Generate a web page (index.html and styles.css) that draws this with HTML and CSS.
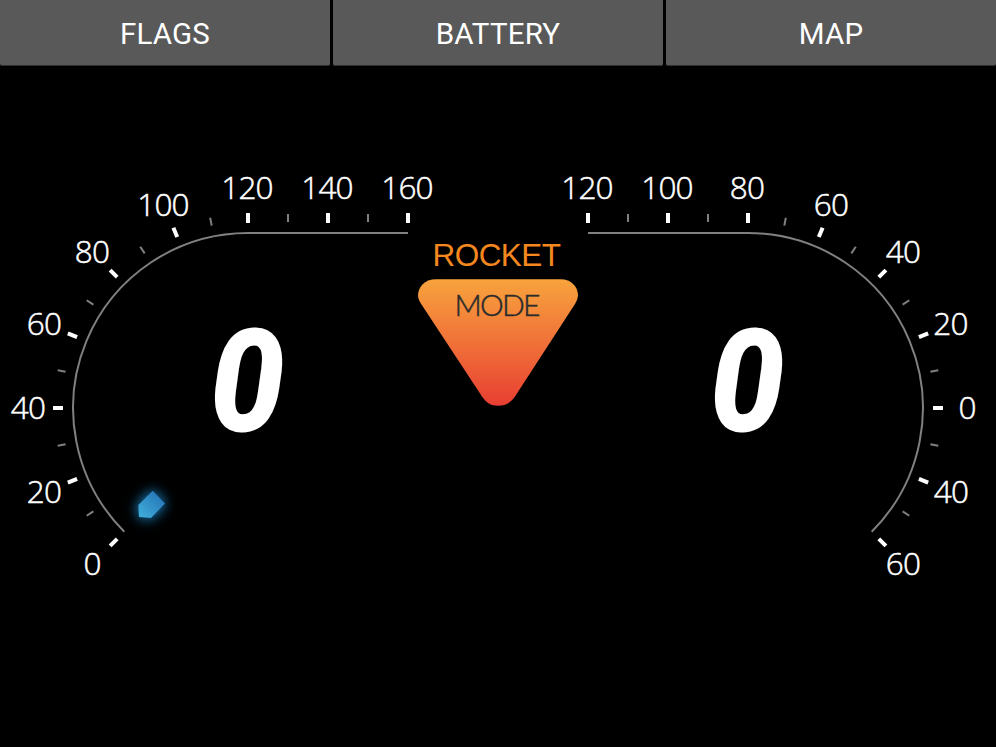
FILE: index.html
```html
<!DOCTYPE html>
<html lang="en">
<head>
<meta charset="utf-8">
<title>Dashboard</title>
<link rel="stylesheet" href="styles.css">
</head>
<body>
<nav class="tabs">
  <button class="tab">FLAGS</button>
  <button class="tab">BATTERY</button>
  <button class="tab">MAP</button>
</nav>
<main class="cluster">
<svg class="gauges" viewBox="0 66 996 681">
  <defs>
    <path id="major" class="major" d="M0-185V-195"/>
    <path id="minor" class="minor" d="M0-186V-194"/>
    <linearGradient id="rocketFill" x1="0" y1="0" x2="0" y2="1">
      <stop offset="0" stop-color="#f8a33d"/>
      <stop offset="1" stop-color="#e83f33"/>
    </linearGradient>
    <linearGradient id="needleFill" x1="1" y1="0" x2="0.1" y2="1">
      <stop offset="0.1" stop-color="#2472b5"/>
      <stop offset="1" stop-color="#40aed9"/>
    </linearGradient>
  </defs>

  <g transform="translate(248 408)">
    <path class="track" d="M160-175H0A175 175 0 0 0-123.7 123.7"/>
    <use href="#major" x="160"/><use href="#minor" x="120"/>
    <use href="#major" x="80"/><use href="#minor" x="40"/>
    <use href="#major"/>
    <use href="#minor" transform="rotate(-11.25)"/>
    <use href="#major" transform="rotate(-22.5)"/>
    <use href="#minor" transform="rotate(-33.75)"/>
    <use href="#major" transform="rotate(-45)"/>
    <use href="#minor" transform="rotate(-56.25)"/>
    <use href="#major" transform="rotate(-67.5)"/>
    <use href="#minor" transform="rotate(-78.75)"/>
    <use href="#major" transform="rotate(-90)"/>
    <use href="#minor" transform="rotate(-101.25)"/>
    <use href="#major" transform="rotate(-112.5)"/>
    <use href="#minor" transform="rotate(-123.75)"/>
    <use href="#major" transform="rotate(-135)"/>
  </g>
  <g class="labels">
    <text x="92" y="575">0</text>
    <text x="44" y="503">20</text>
    <text x="28" y="419">40</text>
    <text x="44" y="335">60</text>
    <text x="92" y="263">80</text>
    <text x="163" y="216">100</text>
    <text x="247" y="199">120</text>
    <text x="327" y="199">140</text>
    <text x="407" y="199">160</text>
  </g>

  <g transform="translate(748 408)">
    <path class="track" d="M-160-175H0A175 175 0 0 1 123.7 123.7"/>
    <use href="#major" x="-160"/><use href="#minor" x="-120"/>
    <use href="#major" x="-80"/><use href="#minor" x="-40"/>
    <use href="#major"/>
    <use href="#minor" transform="rotate(11.25)"/>
    <use href="#major" transform="rotate(22.5)"/>
    <use href="#minor" transform="rotate(33.75)"/>
    <use href="#major" transform="rotate(45)"/>
    <use href="#minor" transform="rotate(56.25)"/>
    <use href="#major" transform="rotate(67.5)"/>
    <use href="#minor" transform="rotate(78.75)"/>
    <use href="#major" transform="rotate(90)"/>
    <use href="#minor" transform="rotate(101.25)"/>
    <use href="#major" transform="rotate(112.5)"/>
    <use href="#minor" transform="rotate(123.75)"/>
    <use href="#major" transform="rotate(135)"/>
  </g>
  <g class="labels">
    <text x="587" y="199">120</text>
    <text x="667" y="199">100</text>
    <text x="747" y="199">80</text>
    <text x="831" y="216">60</text>
    <text x="903" y="263">40</text>
    <text x="950.5" y="335">20</text>
    <text x="967" y="419">0</text>
    <text x="951" y="503">40</text>
    <text x="903" y="575">60</text>
  </g>

  <text class="readout" transform="translate(247 430) scale(.94 1)">0</text>
  <text class="readout" transform="translate(747 430) scale(.94 1)">0</text>

  <path class="needle" d="M152.7 490.7 165 503.4 151 518 139 517 138.3 505Z" fill="url(#needleFill)"/>

  <text class="rocket" x="432.5" y="266" textLength="128.5">ROCKET</text>
  <path d="M436 279.2H560.5C571.5 279.2 578.2 287 578 296Q577.5 300 575 304L515 396.5C510 403.5 505 405.7 498 405.7S487 403.5 482 396.5L421.5 304.5Q418 299 418 295.5C418 287 424.5 279.2 436 279.2Z" fill="url(#rocketFill)"/>
  <text class="mode" x="454.5" y="316.3" textLength="86">MODE</text>
</svg>
</main>
</body>
</html>
```
FILE: styles.css
```css
body {
  margin: 0;
  height: 747px;
  display: flex;
  flex-direction: column;
  overflow: hidden;
  background: #000;
}

.tabs {
  display: grid;
  grid-template-columns: repeat(3, 1fr);
  gap: 3px;
  height: 66px;
}

.tab {
  margin: 0;
  padding: 2px 0 0;
  border: 0;
  border-bottom: 1px solid #303030;
  border-radius: 0 0 2px 2px;
  background: #595959;
  color: #fff;
  font: 400 29.5px Roboto, sans-serif;
  letter-spacing: 0.2px;
}

.cluster {
  flex: 1;
}

.gauges {
  display: block;
  width: 996px;
  height: 681px;
}

.track {
  fill: none;
  stroke: #808080;
  stroke-width: 2;
}

.major {
  stroke: #fff;
  stroke-width: 4;
}

.minor {
  stroke: #808080;
  stroke-width: 2;
}

.labels {
  fill: #fff;
  stroke: #fff;
  stroke-width: 0.5px;
  font: 300 31.5px "Open Sans", "Noto Sans", sans-serif;
  letter-spacing: -0.8px;
  text-anchor: middle;
}

.readout {
  fill: #fff;
  stroke: #fff;
  stroke-width: 3px;
  stroke-linejoin: round;
  font: italic 700 139px Roboto, sans-serif;
  text-anchor: middle;
}

.rocket {
  fill: #f5871f;
  font: 31.5px "Liberation Sans", Arial, sans-serif;
}

.mode {
  fill: #2b2b2b;
  stroke: #2b2b2b;
  stroke-width: 0.5px;
  font: 300 30px Lato, sans-serif;
}

.needle {
  filter: drop-shadow(0 0 6px #176b99) drop-shadow(0 0 6px #0a3a5a);
}
```
